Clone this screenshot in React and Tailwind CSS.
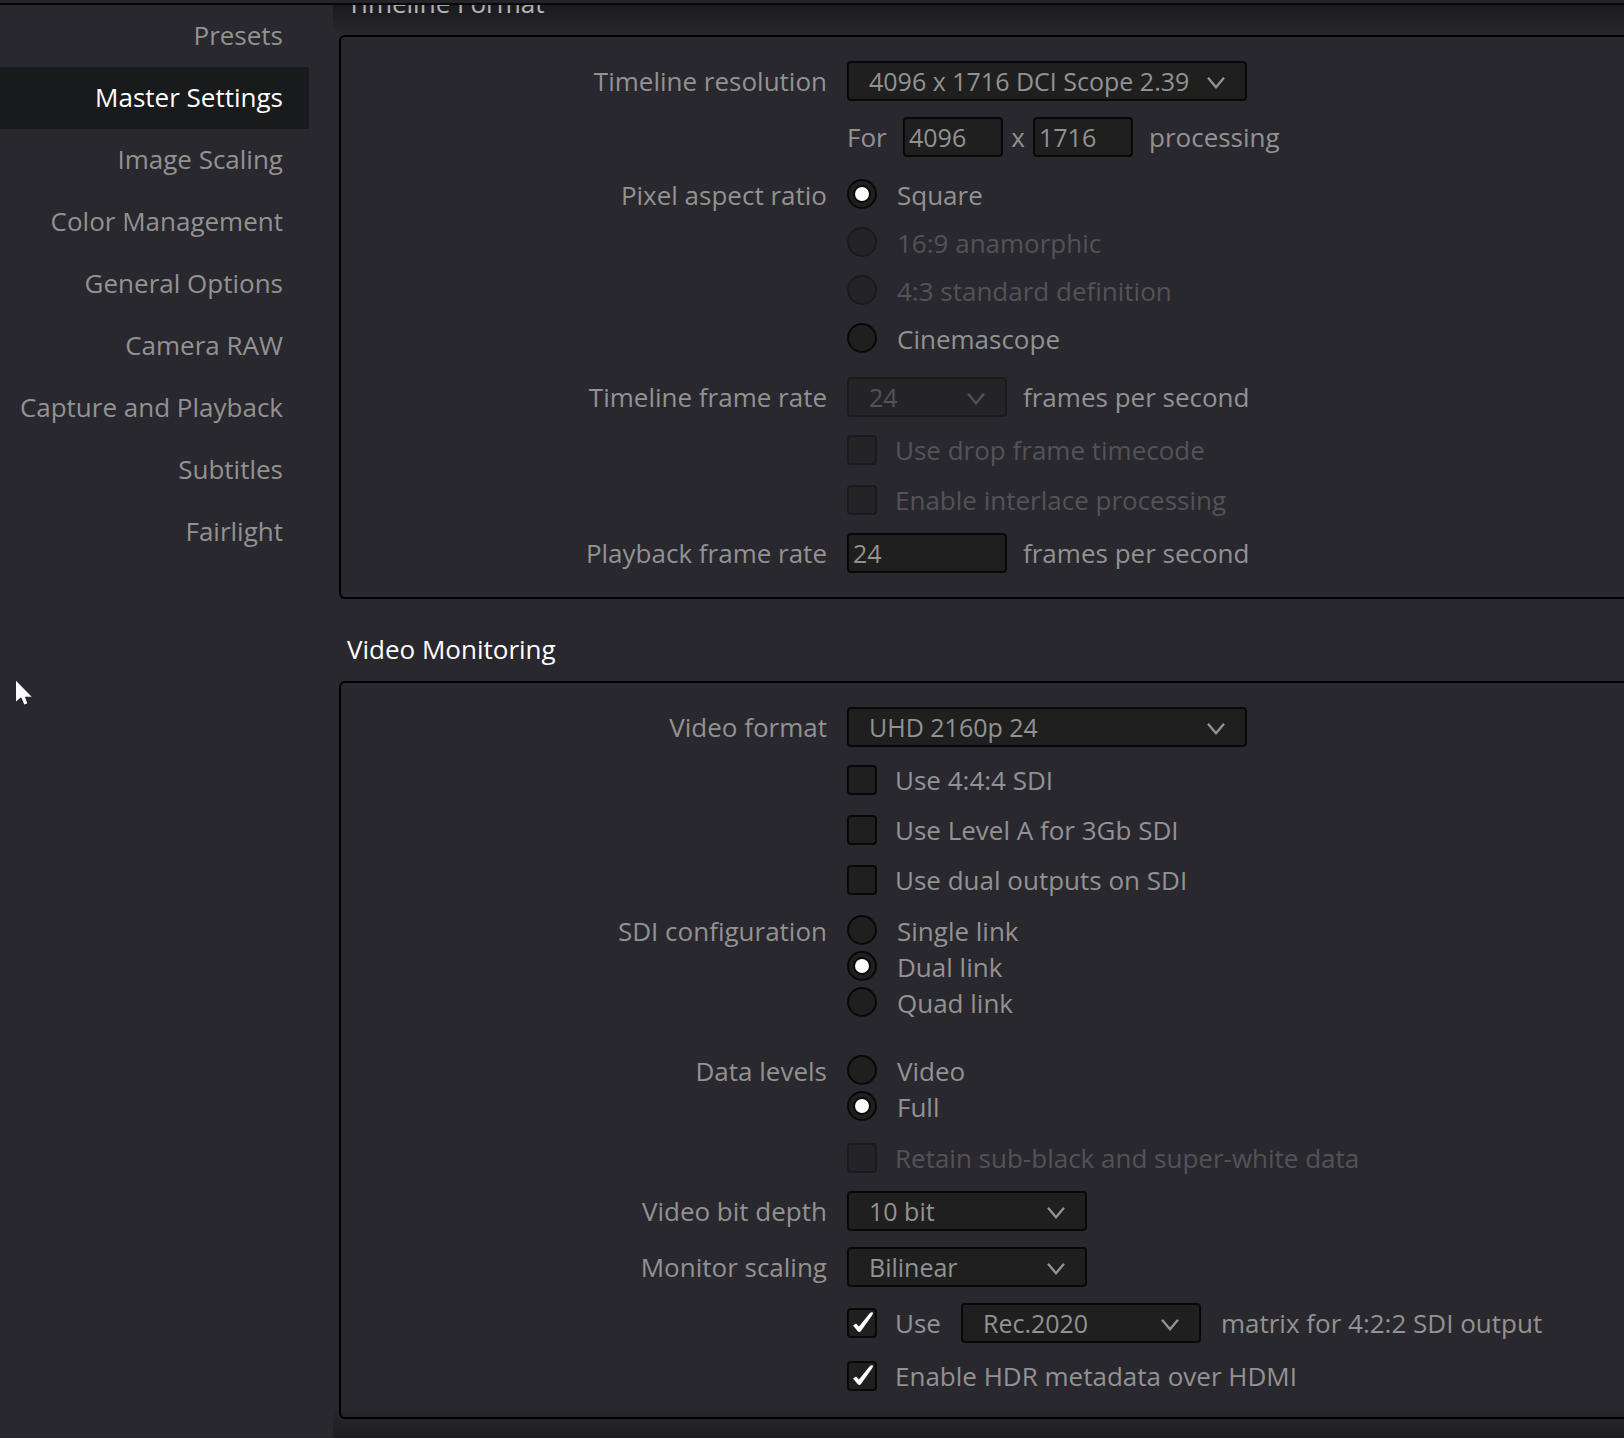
import { useState } from "react";
import clsx from "clsx";

const NAV_ITEMS = [
  "Presets",
  "Master Settings",
  "Image Scaling",
  "Color Management",
  "General Options",
  "Camera RAW",
  "Capture and Playback",
  "Subtitles",
  "Fairlight",
];

const PIXEL_ASPECTS = [
  { label: "Square" },
  { label: "16:9 anamorphic", disabled: true },
  { label: "4:3 standard definition", disabled: true },
  { label: "Cinemascope" },
];

const SDI_LINKS = [{ label: "Single link" }, { label: "Dual link" }, { label: "Quad link" }];

const DATA_LEVELS = [{ label: "Video" }, { label: "Full" }];

function Row({ label, htmlFor, className, children }) {
  return (
    <div className={clsx("grid grid-cols-[506px_1fr] items-start", className)}>
      {label ? (
        <label htmlFor={htmlFor} className="pr-5 text-right leading-10">
          {label}
        </label>
      ) : (
        <span />
      )}
      <div className="flex items-center whitespace-nowrap">{children}</div>
    </div>
  );
}

function Select({ id, label, options, className, disabled }) {
  return (
    <div className={clsx("relative h-10", className, disabled && "opacity-40")}>
      <select
        id={id}
        aria-label={label}
        disabled={disabled}
        className="block h-full w-full appearance-none rounded border-2 border-[#080808] bg-[#1f1f1f] pb-0.5 pl-5 text-[25px] text-[#929292] outline-none disabled:opacity-100"
      >
        {options.map((option) => (
          <option key={option}>{option}</option>
        ))}
      </select>
      <svg
        viewBox="0 0 18 12"
        className="pointer-events-none absolute top-4 right-[22px] h-3 w-[18px]"
        fill="none"
        stroke="#929292"
        strokeWidth="2.4"
      >
        <path d="M1 0.8L9 10.2L17 0.8" />
      </svg>
    </div>
  );
}

function NumberInput({ id, label, value, className }) {
  return (
    <input
      id={id}
      aria-label={label}
      type="text"
      defaultValue={value}
      className={clsx(
        "h-10 rounded border-2 border-[#080808] bg-[#1f1f1f] px-1 text-[25px] text-[#929292] outline-none",
        className
      )}
    />
  );
}

function RadioGroup({ name, label, options, initial, className, gap }) {
  const [selected, setSelected] = useState(initial);

  return (
    <div
      role="radiogroup"
      aria-label={label}
      className={clsx("grid grid-cols-[506px_1fr] items-start", className)}
    >
      <span className="pr-5 text-right leading-8">{label}</span>
      <div className={clsx("flex flex-col items-start", gap)}>
        {options.map((option) => (
          <label
            key={option.label}
            className={clsx("flex items-start gap-5 leading-8", option.disabled && "opacity-40")}
          >
            <input
              type="radio"
              name={name}
              disabled={option.disabled}
              checked={selected === option.label}
              onChange={() => setSelected(option.label)}
              className="grid size-[30px] shrink-0 appearance-none place-items-center rounded-full border-2 border-[#080808] bg-[#1f1f1f] before:size-[18px] before:rounded-full before:border-2 before:border-[#080808] before:bg-white before:opacity-0 checked:before:opacity-100"
            />
            {option.label}
          </label>
        ))}
      </div>
    </div>
  );
}

function Checkbox({ label, initial = false, disabled }) {
  const [checked, setChecked] = useState(initial);

  return (
    <label className={clsx("flex items-center gap-[18px] leading-[30px]", disabled && "opacity-40")}>
      <span className="relative size-[30px] shrink-0">
        <input
          type="checkbox"
          checked={checked}
          disabled={disabled}
          onChange={(event) => setChecked(event.target.checked)}
          className="block size-full appearance-none rounded border-2 border-[#080808] bg-[#1f1f1f]"
        />
        {checked && (
          <svg viewBox="0 0 30 30" className="pointer-events-none absolute inset-0" fill="#fff">
            <path d="M6 17.5L9 15.5L12 18.5L22.5 5.5Q24.5 3.5 26 4.5Q26 6 25 7.5L14 23Q12.5 24.5 11 23.5Z" />
          </svg>
        )}
      </span>
      {label}
    </label>
  );
}

function Section({ title, className, children }) {
  return (
    <section className={className}>
      <h2 className="pb-3.5 pl-2 leading-9 text-white">{title}</h2>
      <div className="rounded-l-md border-2 border-r-0 border-black py-6">{children}</div>
    </section>
  );
}

function Sidebar() {
  const [active, setActive] = useState("Master Settings");

  return (
    <nav className="w-[309px] shrink-0">
      {NAV_ITEMS.map((item) => (
        <button
          key={item}
          type="button"
          onClick={() => setActive(item)}
          className={clsx(
            "block h-[62px] w-full pr-[26px] pb-0.5 text-right whitespace-nowrap",
            active === item && "bg-[#181a1b] text-white"
          )}
        >
          {item}
        </button>
      ))}
    </nav>
  );
}

function App() {
  return (
    <div className="flex h-screen flex-col overflow-hidden bg-[#29282e] font-['Open_Sans',sans-serif] text-[26px] text-[#929292]">
      <header className="h-[5px] shrink-0 border-b-2 border-[#080808] bg-[#242429]" />

      <div className="flex min-h-0 flex-1 gap-6">
        <Sidebar />

        <main className="relative min-w-0 flex-1 overflow-hidden pl-1.5">
          <Section title="Timeline Format" className="-mt-5">
            <Row label="Timeline resolution" htmlFor="timeline-resolution">
              <Select
                id="timeline-resolution"
                className="w-[400px]"
                options={["4096 x 1716 DCI Scope 2.39"]}
              />
            </Row>
            <Row className="mt-4">
              <span className="w-14">For</span>
              <NumberInput label="Processing width" value="4096" className="w-[100px]" />
              <span className="w-[30px] text-center">x</span>
              <NumberInput label="Processing height" value="1716" className="w-[100px]" />
              <span className="ml-4">processing</span>
            </Row>
            <RadioGroup
              name="pixel-aspect"
              label="Pixel aspect ratio"
              options={PIXEL_ASPECTS}
              initial="Square"
              gap="gap-4"
              className="mt-[22px]"
            />
            <Row label="Timeline frame rate" htmlFor="timeline-rate" className="mt-[22px]">
              <Select id="timeline-rate" className="w-40" options={["24"]} disabled />
              <span className="ml-4">frames per second</span>
            </Row>
            <Row className="mt-[18px]">
              <Checkbox label="Use drop frame timecode" disabled />
            </Row>
            <Row className="mt-5">
              <Checkbox label="Enable interlace processing" disabled />
            </Row>
            <Row label="Playback frame rate" htmlFor="playback-rate" className="mt-[18px]">
              <NumberInput id="playback-rate" value="24" className="w-40" />
              <span className="ml-4">frames per second</span>
            </Row>
          </Section>

          <Section title="Video Monitoring" className="mt-8">
            <Row label="Video format" htmlFor="video-format">
              <Select id="video-format" className="w-[400px]" options={["UHD 2160p 24"]} />
            </Row>
            <Row className="mt-[18px]">
              <Checkbox label="Use 4:4:4 SDI" />
            </Row>
            <Row className="mt-5">
              <Checkbox label="Use Level A for 3Gb SDI" />
            </Row>
            <Row className="mt-5">
              <Checkbox label="Use dual outputs on SDI" />
            </Row>
            <RadioGroup
              name="sdi-configuration"
              label="SDI configuration"
              options={SDI_LINKS}
              initial="Dual link"
              gap="gap-1"
              className="mt-5"
            />
            <RadioGroup
              name="data-levels"
              label="Data levels"
              options={DATA_LEVELS}
              initial="Full"
              gap="gap-1"
              className="mt-9"
            />
            <Row className="mt-5">
              <Checkbox label="Retain sub-black and super-white data" disabled />
            </Row>
            <Row label="Video bit depth" htmlFor="bit-depth" className="mt-[18px]">
              <Select id="bit-depth" className="w-60" options={["10 bit"]} />
            </Row>
            <Row label="Monitor scaling" htmlFor="monitor-scaling" className="mt-4">
              <Select id="monitor-scaling" className="w-60" options={["Bilinear"]} />
            </Row>
            <Row className="mt-4">
              <Checkbox label="Use" initial />
              <Select label="Matrix" className="ml-5 w-60" options={["Rec.2020"]} />
              <span className="ml-5">matrix for 4:2:2 SDI output</span>
            </Row>
            <Row className="mt-[18px] pb-0.5">
              <Checkbox label="Enable HDR metadata over HDMI" initial />
            </Row>
          </Section>

          {/* scroll shadows */}
          <div className="pointer-events-none absolute inset-x-0 top-0 h-8 bg-linear-to-b from-black/35 to-transparent" />
          <div className="pointer-events-none absolute inset-x-0 bottom-0 h-8 bg-linear-to-t from-black/30 to-transparent" />
        </main>
      </div>

      <svg
        viewBox="0 0 18 27"
        className="pointer-events-none absolute top-[679px] left-[15px] h-[27px] w-[18px]"
      >
        <path
          d="M0.5 0.8V23.5L6 18.8L9 26.2L13 24.5L10.4 18.2H17.6Z"
          fill="#fff"
          stroke="#0c0c18"
          strokeWidth="0.8"
        />
      </svg>
    </div>
  );
}

export default App;
